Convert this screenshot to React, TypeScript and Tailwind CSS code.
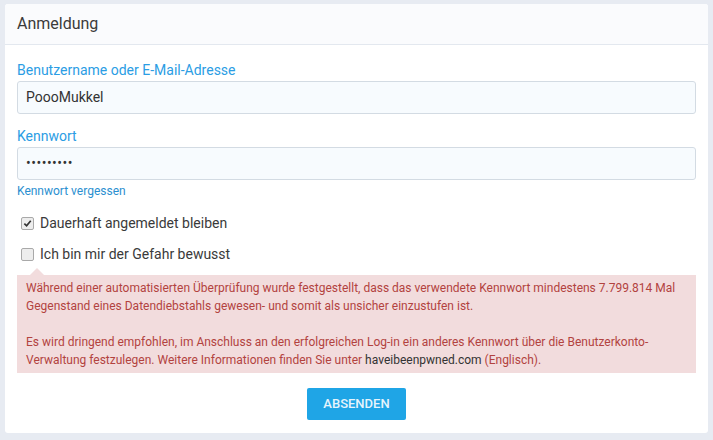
import React from 'react';

function Box({ checked }: { checked?: boolean }) {
  return (
    <span className="flex h-[13px] w-[13px] items-center justify-center rounded-[2px] border border-[#a9a9a9] bg-[#ededed]">
      {checked && (
        <svg viewBox="0 0 10 10" className="h-[9px] w-[9px]">
          <path d="M1.5 5.2 L4 7.6 L8.6 2" fill="none" stroke="#333" strokeWidth="1.9" />
        </svg>
      )}
    </span>
  );
}

export default function App() {
  return (
    <div className="min-h-[440px] bg-[#e7ebf2] px-[5px] pt-[4px] pb-[6px] font-['Roboto',sans-serif]">
      <div className="overflow-hidden rounded-[3px] bg-white">
        {/* Header */}
        <div className="h-[41px] border-b border-[#e3e8ef] bg-[#fafbfd] px-[12px] pt-[10px]">
          <h1 className="text-[16px] leading-[20px] text-[#3a3a3a]">Anmeldung</h1>
        </div>

        <div className="px-[12px] pt-[16px] pb-[13px]">
          <label className="block text-[14px] leading-[18px] text-[#2b9de4]">Benutzername oder E-Mail-Adresse</label>
          <div className="mt-[2px] flex h-[33px] items-center rounded-[3px] border border-[#d3dbe3] bg-[#f7fbfe] px-[8px] text-[14px] text-[#333]">
            PoooMukkel
          </div>

          <label className="mt-[13px] block text-[14px] leading-[18px] text-[#2b9de4]">Kennwort</label>
          <div className="mt-[2px] flex h-[33px] items-center rounded-[3px] border border-[#d3dbe3] bg-[#f7fbfe] px-[8px] text-[14px] tracking-[0.5px] text-[#333]">
            •••••••••
          </div>
          <a className="mt-[3px] block text-[12px] leading-[16px] text-[#2b8fd0]">Kennwort vergessen</a>

          <div className="mt-[15px] flex items-center gap-[6px] pl-[4px] text-[14px] leading-[18px] text-[#3a3a3a]">
            <Box checked />
            <span>Dauerhaft angemeldet bleiben</span>
          </div>
          <div className="mt-[13px] flex items-center gap-[6px] pl-[4px] text-[14px] leading-[18px] text-[#3a3a3a]">
            <Box />
            <span>Ich bin mir der Gefahr bewusst</span>
          </div>

          <div className="relative mt-[12px] bg-[#f2dcdd] px-[9px] py-[4px] text-[12px] leading-[18px] text-[#b2433f]">
            <span className="absolute left-[13px] top-[-7px] h-0 w-0 border-x-[7px] border-b-[7px] border-x-transparent border-b-[#f2dcdd]" />
            <p>
              Während einer automatisierten Überprüfung wurde festgestellt, dass das verwendete Kennwort mindestens 7.799.814 Mal
              Gegenstand eines Datendiebstahls gewesen- und somit als unsicher einzustufen ist.
            </p>
            <p className="mt-[18px]">
              Es wird dringend empfohlen, im Anschluss an den erfolgreichen Log-in ein anderes Kennwort über die Benutzerkonto-
              Verwaltung festzulegen. Weitere Informationen finden Sie unter{' '}
              <span className="text-[#333]">haveibeenpwned.com</span> (Englisch).
            </p>
          </div>

          <div className="mt-[15px] flex justify-center">
            <button className="h-[32px] w-[99px] rounded-[2px] bg-[#1fa5e6] text-[13px] font-medium text-[#e6f4fc]">
              ABSENDEN
            </button>
          </div>
        </div>
      </div>
    </div>
  );
}
